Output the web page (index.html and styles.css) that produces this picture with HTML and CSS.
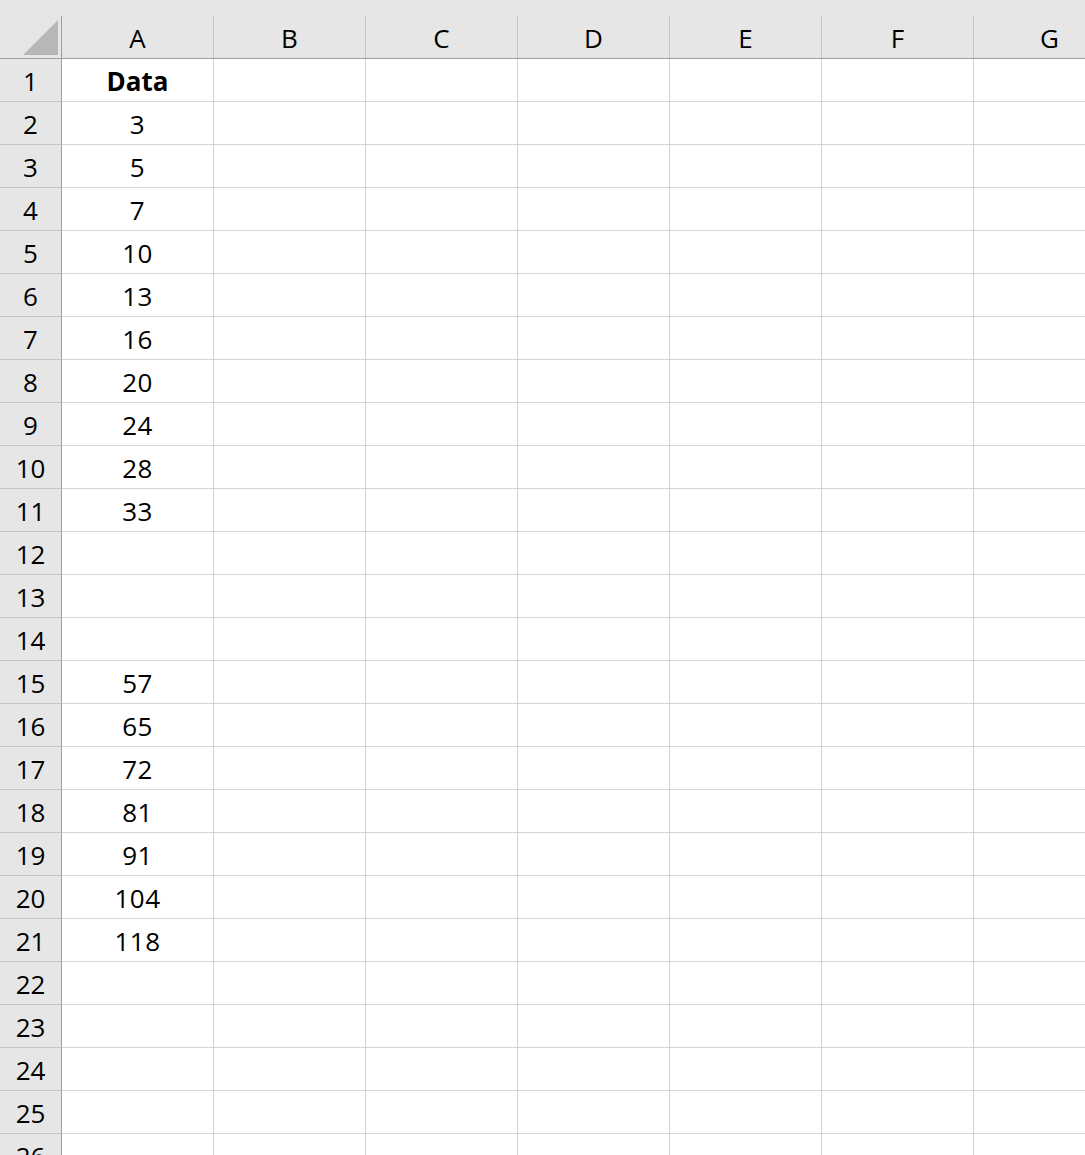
FILE: index.html
```html
<!DOCTYPE html>
<html lang="en">
<head>
    <meta charset="UTF-8">
    <meta name="viewport" content="width=device-width, initial-scale=1.0">
    <title>Sheet1</title>
    <link rel="stylesheet" href="styles.css">
</head>
<body>
    <div class="sheet">
        <div class="col-headers">
            <div class="corner"><span class="corner-mark"></span></div>
            <div class="col-head">A</div>
            <div class="col-head">B</div>
            <div class="col-head">C</div>
            <div class="col-head">D</div>
            <div class="col-head">E</div>
            <div class="col-head">F</div>
            <div class="col-head">G</div>
        </div>
        <div class="rows" id="rows"></div>
    </div>

    <script>
        // Column A values, one per row (row 1 is the header)
        const columnA = ['Data', 3, 5, 7, 10, 13, 16, 20, 24, 28, 33, '', '', '', 57, 65, 72, 81, 91, 104, 118, '', '', '', '', ''];
        const rows = document.getElementById('rows');

        columnA.forEach((value, i) => {
            const row = document.createElement('div');
            row.className = 'row';

            const head = document.createElement('div');
            head.className = 'row-head';
            head.textContent = i + 1;
            row.appendChild(head);

            for (let c = 0; c < 7; c++) {
                const cell = document.createElement('div');
                cell.className = 'cell';
                if (c === 0) {
                    cell.textContent = value;
                    if (i === 0) cell.classList.add('bold');
                }
                row.appendChild(cell);
            }
            rows.appendChild(row);
        });
    </script>
</body>
</html>
```

FILE: styles.css
```css
html, body {
    margin: 0;
    padding: 0;
    height: 100%;
    overflow: hidden;
    background-color: #FFFFFF;
}
.sheet {
    font-family: "Open Sans", "Noto Sans", sans-serif;
    font-size: 26px;
    color: #000000;
    width: 1126px;
}
.col-headers {
    display: flex;
    padding-top: 16px;
    background-color: #E6E6E6;
    border-bottom: 1px solid #9E9E9E;
}
.corner {
    flex: 0 0 62px;
    height: 42px;
    box-sizing: border-box;
    border-right: 1px solid #9E9E9E;
    position: relative;
}
.corner-mark {
    position: absolute;
    right: 3px;
    bottom: 3px;
    width: 0;
    height: 0;
    border-left: 35px solid transparent;
    border-bottom: 35px solid #B7B7B7;
}
.col-head {
    flex: 0 0 152px;
    height: 42px;
    box-sizing: border-box;
    border-right: 1px solid #C4C4C4;
    display: flex;
    align-items: center;
    justify-content: center;
    padding-top: 1px;
}
.row {
    display: flex;
    height: 43px;
}
.row-head {
    flex: 0 0 62px;
    box-sizing: border-box;
    background-color: #E6E6E6;
    border-right: 1px solid #9E9E9E;
    border-bottom: 1px solid #C4C4C4;
    display: flex;
    align-items: center;
    justify-content: center;
    padding-top: 1px;
}
.cell {
    flex: 0 0 152px;
    box-sizing: border-box;
    border-right: 1px solid #D4D4D4;
    border-bottom: 1px solid #D4D4D4;
    display: flex;
    align-items: center;
    justify-content: center;
    padding-top: 1px;
    letter-spacing: 0.5px;
}
.bold {
    font-weight: bold;
    letter-spacing: 0;
}
```
